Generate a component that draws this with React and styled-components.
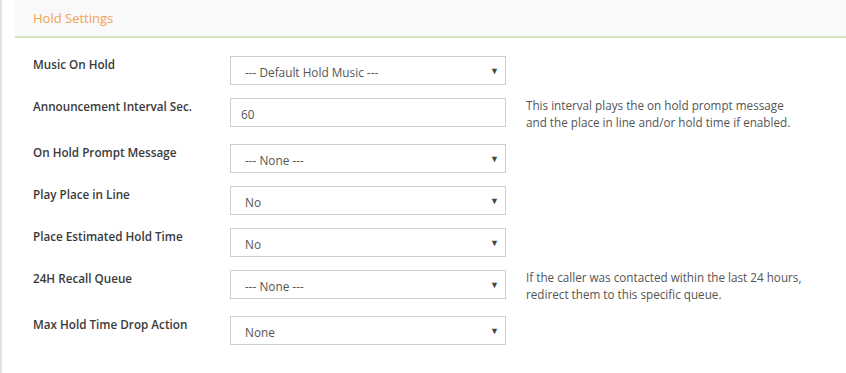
import React from 'react'
import styled, { createGlobalStyle } from 'styled-components'

const GlobalStyle = createGlobalStyle`
  html, body {
    margin: 0;
    padding: 0;
    background: #fff;
  }
  body {
    font-family: 'Open Sans', 'Liberation Sans', sans-serif;
    color: #333;
  }
`

const rows = [
  { label: 'Music On Hold', type: 'select', value: '--- Default Hold Music ---' },
  {
    label: 'Announcement Interval Sec.',
    type: 'input',
    value: '60',
    help: 'This interval plays the on hold prompt message and the place in line and/or hold time if enabled.',
  },
  { label: 'On Hold Prompt Message', type: 'select', value: '--- None ---' },
  { label: 'Play Place in Line', type: 'select', value: 'No' },
  { label: 'Place Estimated Hold Time', type: 'select', value: 'No' },
  {
    label: '24H Recall Queue',
    type: 'select',
    value: '--- None ---',
    help: 'If the caller was contacted within the last 24 hours, redirect them to this specific queue.',
  },
  { label: 'Max Hold Time Drop Action', type: 'select', value: 'None' },
]

const App = () => {
  return (
    <>
      <GlobalStyle />
      <Page>
        <Header>
          <Title>Hold Settings</Title>
        </Header>
        <Form>
          {rows.map((row) => (
            <Row key={row.label}>
              <Label>{row.label}</Label>
              {row.type === 'select' ? (
                <SelectBox>
                  <span>{row.value}</span>
                  <Arrow>▼</Arrow>
                </SelectBox>
              ) : (
                <Input defaultValue={row.value} />
              )}
              {row.help && <Help>{row.help}</Help>}
            </Row>
          ))}
        </Form>
      </Page>
    </>
  )
}

const Page = styled.div`
  border-left: 2px solid #e2e2e2;
  padding-left: 13px;
  min-height: 373px;
  box-sizing: border-box;
`

const Header = styled.div`
  display: flex;
  align-items: center;
  height: 36px;
  padding-left: 18px;
  background-color: #f9f9f9;
  border-bottom: 2px solid #d3e5c5;
`

const Title = styled.h3`
  margin: 0;
  font-size: 13px;
  font-weight: 400;
  color: #f0a255;
`

const Form = styled.div`
  display: flex;
  flex-direction: column;
  gap: 13px;
  padding: 18px 0 0 18px;
`

const Row = styled.div`
  display: grid;
  grid-template-columns: 197px 276px 300px;
  align-items: start;
`

const Label = styled.label`
  font-size: 11.7px;
  font-weight: 600;
  line-height: 17px;
  color: #3a3a3a;
`

const SelectBox = styled.div`
  display: flex;
  align-items: center;
  justify-content: space-between;
  height: 29px;
  box-sizing: border-box;
  padding: 2px 6px 0 14px;
  border: 1px solid #cfcfcf;
  background: #fff;
  font-size: 11.8px;
  color: #555;
`

const Arrow = styled.span`
  font-size: 9px;
  color: #444;
  margin-top: -3px;
`

const Input = styled.input`
  height: 29px;
  box-sizing: border-box;
  padding: 2px 10px 0;
  border: 1px solid #cfcfcf;
  font-family: inherit;
  font-size: 11.8px;
  color: #555;
  outline: none;
`

const Help = styled.div`
  margin: -1px 0 0 20px;
  font-size: 11.7px;
  line-height: 17px;
  color: #555;
`

export default App
